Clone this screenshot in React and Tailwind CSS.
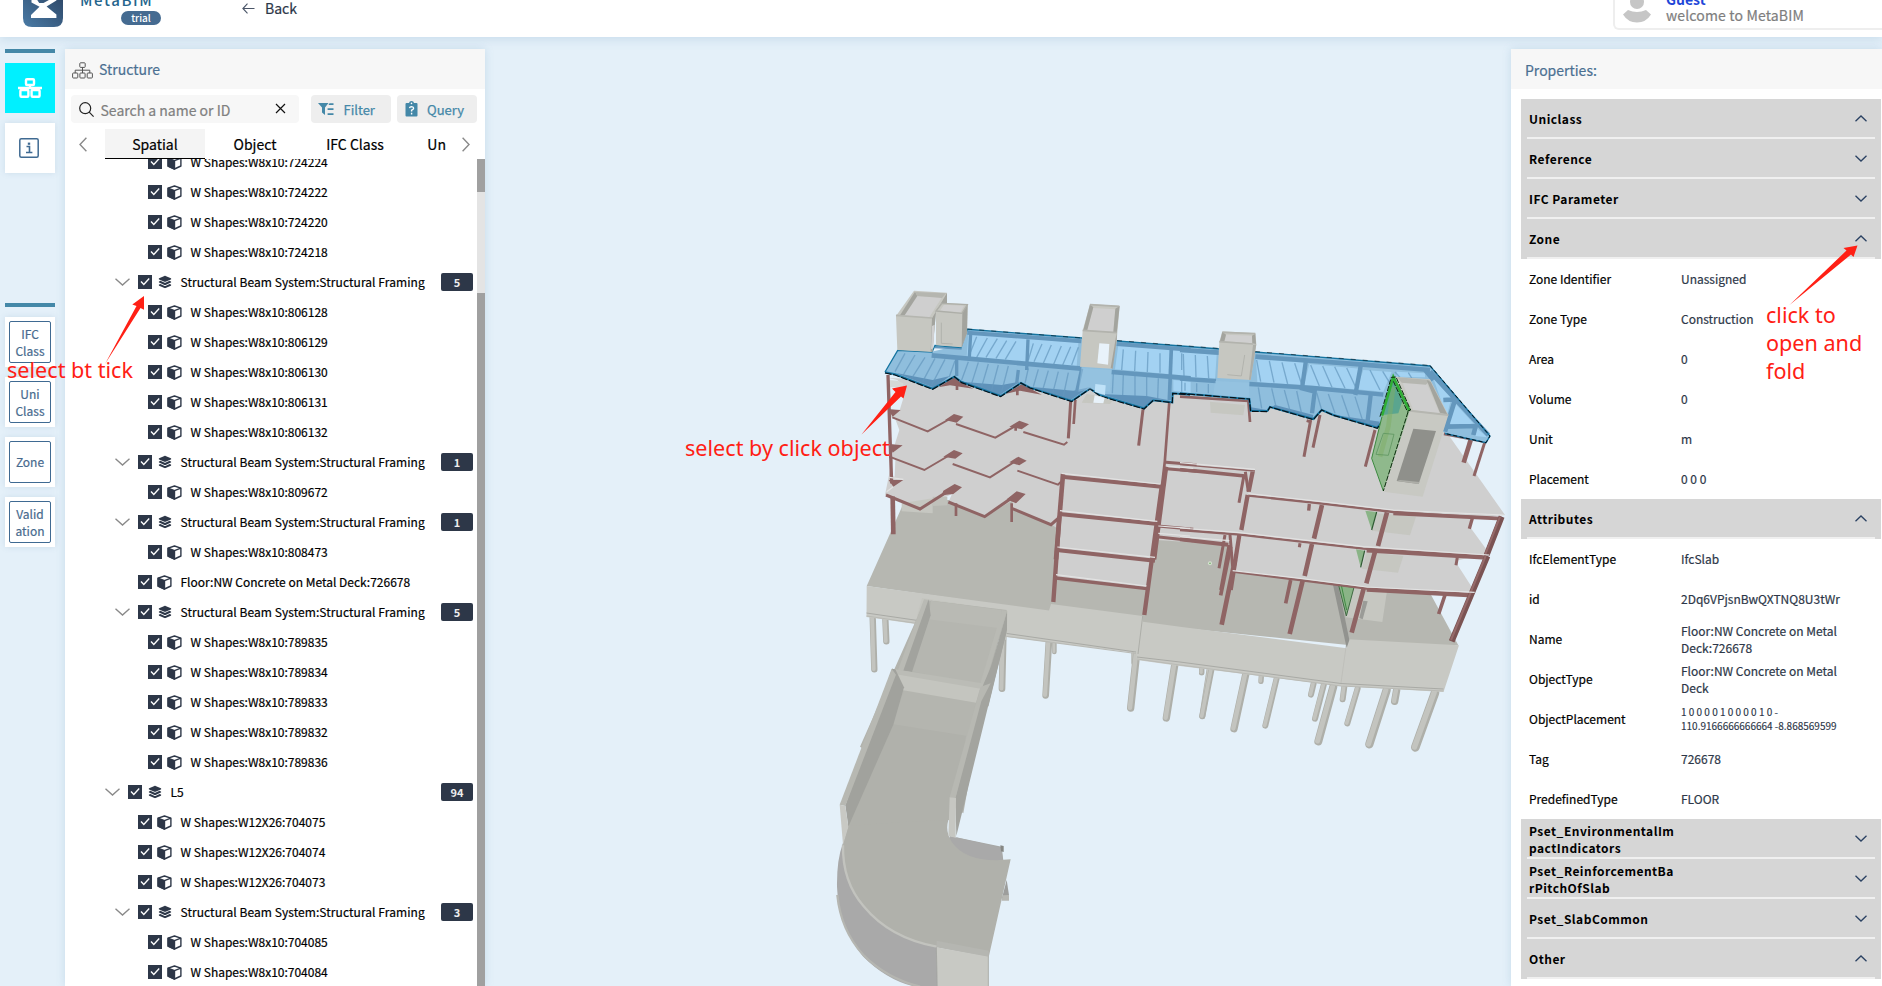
import React from "react";
import { FaLayerGroup } from "react-icons/fa6";

const FONT = "font-['Noto_Sans_CJK_SC',sans-serif]";

const BEAM = "Structural Beam System:Structural Framing";
const TREE = [
  { t: "W Shapes:W8x10:724224", d: 2 },
  { t: "W Shapes:W8x10:724222", d: 2 },
  { t: "W Shapes:W8x10:724220", d: 2 },
  { t: "W Shapes:W8x10:724218", d: 2 },
  { t: BEAM, d: 1, n: 5 },
  { t: "W Shapes:W8x10:806128", d: 2 },
  { t: "W Shapes:W8x10:806129", d: 2 },
  { t: "W Shapes:W8x10:806130", d: 2 },
  { t: "W Shapes:W8x10:806131", d: 2 },
  { t: "W Shapes:W8x10:806132", d: 2 },
  { t: BEAM, d: 1, n: 1 },
  { t: "W Shapes:W8x10:809672", d: 2 },
  { t: BEAM, d: 1, n: 1 },
  { t: "W Shapes:W8x10:808473", d: 2 },
  { t: "Floor:NW Concrete on Metal Deck:726678", d: 1 },
  { t: BEAM, d: 1, n: 5 },
  { t: "W Shapes:W8x10:789835", d: 2 },
  { t: "W Shapes:W8x10:789834", d: 2 },
  { t: "W Shapes:W8x10:789833", d: 2 },
  { t: "W Shapes:W8x10:789832", d: 2 },
  { t: "W Shapes:W8x10:789836", d: 2 },
  { t: "L5", d: 0, n: 94 },
  { t: "W Shapes:W12X26:704075", d: 1 },
  { t: "W Shapes:W12X26:704074", d: 1 },
  { t: "W Shapes:W12X26:704073", d: 1 },
  { t: BEAM, d: 1, n: 3 },
  { t: "W Shapes:W8x10:704085", d: 2 },
  { t: "W Shapes:W8x10:704084", d: 2 },
];

const INDENT = ["pl-[40px]", "pl-[50px]", "pl-[60px]"];

const PROPS = [
  { g: "Uniclass", open: true },
  { g: "Reference" },
  { g: "IFC Parameter" },
  { g: "Zone", open: true },
  { k: "Zone Identifier", v: "Unassigned" },
  { k: "Zone Type", v: "Construction" },
  { k: "Area", v: "0" },
  { k: "Volume", v: "0" },
  { k: "Unit", v: "m" },
  { k: "Placement", v: "0 0 0" },
  { g: "Attributes", open: true },
  { k: "IfcElementType", v: "IfcSlab" },
  { k: "id", v: "2Dq6VPjsnBwQXTNQ8U3tWr" },
  { k: "Name", v: "Floor:NW Concrete on Metal Deck:726678" },
  { k: "ObjectType", v: "Floor:NW Concrete on Metal Deck" },
  { k: "ObjectPlacement", v: "1 0 0 0 0 1 0 0 0 0 1 0 -\n110.9166666666664 -8.868569599", small: true },
  { k: "Tag", v: "726678" },
  { k: "PredefinedType", v: "FLOOR" },
  { g: "Pset_EnvironmentalImpactIndicators" },
  { g: "Pset_ReinforcementBarPitchOfSlab" },
  { g: "Pset_SlabCommon" },
  { g: "Other", open: true },
];

function Cube() {
  return (
    <svg className="size-[15px] shrink-0" viewBox="0 0 15 15" fill="none" stroke="#2d3748" strokeWidth="1.4" strokeLinejoin="round">
      <path d="M7.5 1 L13.9 3.2 V11 L7.5 14 L1.1 11 V3.2 Z" />
      <path d="M1.1 3.2 L7.5 5.6 V14 L1.1 11 Z" fill="#2d3748" />
      <path d="M7.5 5.6 L13.9 3.2" />
    </svg>
  );
}

function Check() {
  return (
    <span className="flex size-[14px] shrink-0 items-center justify-center bg-[#2d3748]">
      <svg className="size-[10px]" viewBox="0 0 10 10" fill="none" stroke="#fff" strokeWidth="1.4">
        <path d="M1 4.6 L3.8 7.4 L9.2 1.6" />
      </svg>
    </span>
  );
}

function TreeRow({ item }) {
  const group = item.n !== undefined;
  return (
    <div className={`flex h-[30px] shrink-0 items-center ${INDENT[item.d]}`}>
      <span className="mr-[8px] flex w-[15px] shrink-0 justify-center">
        {group && (
          <svg className="h-[8px] w-[15px]" viewBox="0 0 15 8" fill="none" stroke="#8a8a8a" strokeWidth="1.4">
            <path d="M0.5 0.8 L7.5 7 L14.5 0.8" />
          </svg>
        )}
      </span>
      <Check />
      <span className="ml-[5px] flex w-[15px] shrink-0 justify-center">
        {group ? <FaLayerGroup className="size-[14px] text-[#2d3748]" /> : <Cube />}
      </span>
      <span className={`ml-[8.5px] grow whitespace-nowrap text-[12px] leading-[18px] text-black [-webkit-text-stroke:0.2px_black] ${group ? "tracking-[0.065px]" : ""}`}>
        {item.t}
      </span>
      {group && (
        <span className="mr-[4px] flex h-[18px] w-[32px] items-center justify-center rounded-[2px] bg-[#2d3748] text-[11px] font-bold leading-none text-[#eee]">
          {item.n}
        </span>
      )}
    </div>
  );
}

function SideBox({ children }) {
  return (
    <div className="flex size-[50px] items-center justify-center bg-white shadow-[0_0_6px_rgba(100,140,170,0.18)]">
      <div className="flex size-[42px] items-center justify-center rounded-[2px] border border-[#3f6a92] text-center text-[12px] leading-[17.4px] text-[#476a8e] [-webkit-text-stroke:0.2px_#476a8e]">
        <div>{children}</div>
      </div>
    </div>
  );
}

function Header() {
  return (
    <header className="relative z-10 flex h-[37px] shrink-0 items-start bg-white shadow-[0_2px_10px_rgba(110,160,195,0.25)]">
      <svg className="ml-[23px] h-[27px] w-[40px] shrink-0" viewBox="0 0 40 27">
        <defs>
          <linearGradient id="lg" x1="0" y1="1" x2="1" y2="0">
            <stop offset="0" stopColor="#4a7ba6" />
            <stop offset="1" stopColor="#2b4362" />
          </linearGradient>
        </defs>
        <path d="M0 -10 H40 V18 Q40 27 31 27 H9 Q0 27 0 18 Z" fill="url(#lg)" />
        <path d="M8.5 -2 V2.6 L16.5 6.8 L8 15 V18 H33.4 V14.4 L23.6 6.6 L33.4 0.4 V-2 L27 -0.6 L20.5 3 H16.2 L13 -2 Z" fill="#fff" />
      </svg>
      <div className="ml-[17px] w-[84px] shrink-0">
        <div className="-mt-[11px] whitespace-nowrap text-[15px] font-medium leading-[22px] tracking-[1.6px] text-[#25658c]">MetaBIM</div>
        <div className="ml-[41px] flex h-[14px] w-[40px] items-center justify-center rounded-full bg-[#456b91] text-[10px] font-medium leading-none text-white">
          trial
        </div>
      </div>
      <div className="ml-[78px] flex items-center">
        <svg className="h-[11px] w-[13px]" viewBox="0 0 13 11" fill="none" stroke="#4a5568" strokeWidth="1.1">
          <path d="M12.5 5.5 H1 M5.5 0.7 L0.9 5.5 L5.5 10.3" />
        </svg>
        <span className="ml-[10px] text-[14px] leading-[16px] text-[#2d3748] [-webkit-text-stroke:0.2px_#2d3748]">Back</span>
      </div>
      <div className="ml-auto -mt-[18px] flex h-[48px] w-[269px] shrink-0 rounded-bl-[6px] border-2 border-r-0 border-[#eee] bg-white">
        <svg className="ml-[8px] mt-[11px] h-[28px] w-[28px]" viewBox="0 0 28 28" fill="#c6c6c6">
          <circle cx="14" cy="7" r="7" />
          <path d="M5 15 Q14 19 23 15 L28 19.5 Q23 27.5 14 27.5 Q5 27.5 0 19.5 Z" />
        </svg>
        <div className="ml-[15px] pt-[7px]">
          <div className="text-[14px] font-bold leading-[16px] text-[#2146d8]">Guest</div>
          <div className="whitespace-nowrap text-[14px] leading-[17px] tracking-[0.15px] text-[#7e7e7e] [-webkit-text-stroke:0.2px_#7e7e7e]">welcome to MetaBIM</div>
        </div>
      </div>
    </header>
  );
}

function Sidebar() {
  return (
    <aside className="flex w-[65px] shrink-0 flex-col pl-[5px] pt-[12px]">
      <div className="h-[4px] w-[50px] bg-[#4488a8]" />
      <div className="mt-[10px] flex size-[50px] items-center justify-center bg-[#00f0ff]">
        <svg className="-mt-[1px] -ml-[1px] h-[20px] w-[24px]" viewBox="0 0 24 20" fill="none" stroke="#fff" strokeWidth="2.4">
          <rect x="8" y="1.2" width="8" height="5.8" rx="1" />
          <rect x="2.4" y="12" width="8" height="6.8" rx="1" />
          <rect x="13.6" y="12" width="8" height="6.8" rx="1" />
          <path d="M0 10 H24 M12 7 V10" />
        </svg>
      </div>
      <div className="mt-[10px] flex size-[50px] items-center justify-center bg-white shadow-[0_0_6px_rgba(100,140,170,0.18)]">
        <svg className="-ml-[2px] size-[20px]" viewBox="0 0 20 20" fill="none" stroke="#3f6a92" strokeWidth="1.5">
          <rect x="0.8" y="0.8" width="18.4" height="18.4" rx="1.5" />
          <path d="M7.5 8.5 H10.5 V14.2 M7 14.5 H13.4" strokeWidth="1.6" />
          <rect x="8.8" y="4.6" width="2.4" height="2.2" fill="#3f6a92" stroke="none" />
        </svg>
      </div>
      <div className="mt-[130px] h-[4px] w-[50px] bg-[#4488a8]" />
      <div className="mt-[10px] flex flex-col gap-[10px]">
        <SideBox>IFC<br />Class</SideBox>
        <SideBox>Uni<br />Class</SideBox>
        <SideBox>Zone</SideBox>
        <SideBox>Valid<br />ation</SideBox>
      </div>
    </aside>
  );
}

function StructurePanel() {
  return (
    <section className="mt-[12px] flex w-[420px] shrink-0 flex-col overflow-hidden bg-white shadow-[0_0_8px_rgba(110,160,195,0.25)]">
      <div className="flex h-[40px] shrink-0 items-center bg-[#f7f7f7] pl-[7px]">
        <svg className="mt-[3px] h-[17px] w-[21px]" viewBox="0 0 21 17" fill="none" stroke="#555" strokeWidth="1">
          <rect x="7.8" y="0.8" width="5.4" height="4.6" rx="0.8" />
          <rect x="0.6" y="11" width="5.2" height="5" rx="0.8" />
          <rect x="7.9" y="11" width="5.2" height="5" rx="0.8" />
          <rect x="15.2" y="11" width="5.2" height="5" rx="0.8" />
          <path d="M10.5 5.4 V11 M3.2 11 V8.2 H17.8 V11" />
        </svg>
        <span className="ml-[6px] text-[14px] leading-[20px] text-[#4b7092] [-webkit-text-stroke:0.2px_#4b7092]">Structure</span>
      </div>
      <div className="mt-[6px] flex h-[28px] shrink-0 pl-[6px]">
        <div className="flex w-[228px] items-center rounded-[4px] bg-[#f7f7f7] pl-[8px]">
          <svg className="size-[15px]" viewBox="0 0 15 15" fill="none" stroke="#222" strokeWidth="1.2">
            <circle cx="6.2" cy="6.2" r="5.5" />
            <path d="M10.2 10.2 L14.6 14.6" />
          </svg>
          <span className="ml-[6.5px] grow pt-[1px] text-[14px] leading-[20px] text-[#808080] [-webkit-text-stroke:0.2px_#808080]">Search a name or ID</span>
          <svg className="-mt-[2px] mr-[13px] size-[11px]" viewBox="0 0 11 11" fill="none" stroke="#111" strokeWidth="1.2">
            <path d="M1 1 L10 10 M10 1 L1 10" />
          </svg>
        </div>
        <div className="ml-[12px] flex w-[80px] items-center rounded-[4px] bg-[#eee] pl-[7px]">
          <svg className="size-[16px]" viewBox="0 0 16 16" fill="#4488a8">
            <path d="M0 2 H10.5 L7 6.6 V14 L4 11.5 V6.6 Z" />
            <path d="M11.5 2.2 H15.5 V4 H10.5 Z M9.6 7.2 H15.5 V9 H9.6 Z M9.6 12.2 H15.5 V14 H9.6 Z" />
          </svg>
          <span className="ml-[9.5px] pt-[1px] text-[13px] leading-[18px] text-[#4488a8] [-webkit-text-stroke:0.25px_#4488a8]">Filter</span>
        </div>
        <div className="ml-[6px] flex w-[80px] items-center rounded-[4px] bg-[#eee] pl-[8px]">
          <svg className="h-[16px] w-[13px]" viewBox="0 0 13 16">
            <path d="M1.5 2 H4 Q4.3 0 6.5 0 Q8.7 0 9 2 H11.5 Q12.5 2 12.5 3 V14.5 Q12.5 15.6 11.5 15.6 H1.5 Q0.5 15.6 0.5 14.5 V3 Q0.5 2 1.5 2 Z" fill="#4488a8" />
            <circle cx="6.5" cy="2.4" r="0.8" fill="#fff" />
            <path d="M4.5 7.2 Q4.8 5.6 6.6 5.6 Q8.6 5.7 8.6 7.3 Q8.5 8.7 6.6 9.2 V10.6 M6.6 11.8 V13.4" fill="none" stroke="#fff" strokeWidth="1.4" />
          </svg>
          <span className="ml-[9px] pt-[1px] text-[13px] leading-[18px] text-[#4488a8] [-webkit-text-stroke:0.25px_#4488a8]">Query</span>
        </div>
      </div>
      <div className="mt-[6px] flex h-[30px] shrink-0 items-stretch text-[14px] leading-[20px] text-black [-webkit-text-stroke:0.2px_black]">
        <div className="flex w-[40px] items-center pl-[14px]">
          <svg className="h-[15px] w-[8px]" viewBox="0 0 8 15" fill="none" stroke="#8a8a8a" strokeWidth="1.4">
            <path d="M7.4 0.8 L1 7.5 L7.4 14.2" />
          </svg>
        </div>
        <div className="flex w-[100px] items-center justify-center border-b border-black bg-[#f4f4f4] pt-[1px]">Spatial</div>
        <div className="flex w-[100px] items-center justify-center">Object</div>
        <div className="flex w-[100px] items-center justify-center">IFC Class</div>
        <div className="flex w-[57px] items-center justify-end pr-[16px]">Un</div>
        <div className="flex items-center">
          <svg className="h-[15px] w-[8px]" viewBox="0 0 8 15" fill="none" stroke="#8a8a8a" strokeWidth="1.4">
            <path d="M0.6 0.8 L7 7.5 L0.6 14.2" />
          </svg>
        </div>
      </div>
      <div className="flex min-h-0 grow">
        <div className="flex grow flex-col overflow-hidden">
          <div className="-mt-[12px] flex flex-col">
            {TREE.map((item, i) => (
              <TreeRow key={i} item={item} />
            ))}
          </div>
        </div>
        <div className="flex w-[8px] shrink-0 flex-col bg-[#e4e4e4]">
          <div className="h-[33px] bg-[#a0a0a0]" />
          <div className="mt-[101px] grow bg-[#a0a0a0]" />
        </div>
      </div>
    </section>
  );
}

function PropertiesPanel() {
  return (
    <section className="mt-[12px] flex w-[371px] shrink-0 flex-col overflow-hidden bg-white shadow-[0_0_8px_rgba(110,160,195,0.25)]">
      <div className="flex h-[40px] shrink-0 items-center bg-[#f7f7f7] pl-[14px] text-[14px] leading-[20px] text-[#4b7092] [-webkit-text-stroke:0.2px_#4b7092]">
        <span className="mt-[1px]">Properties:</span>
      </div>
      <div className="ml-[10px] mt-[10px] flex w-[360px] flex-col">
        {PROPS.map((p, i) =>
          p.g ? (
            <div key={i} className="flex h-[40px] flex-col bg-[#d6d6d6] px-[6px]">
              <div className="flex grow items-center pl-[2px] pt-[2px]">
                <span className="w-[147px] break-all text-[12px] font-bold leading-[17.4px] tracking-[0.48px] text-black">{p.g}</span>
                <svg className="-mt-[1px] ml-auto mr-[8px] h-[7px] w-[12px]" viewBox="0 0 12 7" fill="none" stroke="#2a4162" strokeWidth="1.3">
                  <path d={p.open ? "M0.5 6.2 L6 1 L11.5 6.2" : "M0.5 0.8 L6 6 L11.5 0.8"} />
                </svg>
              </div>
              <div className="h-[2px] shrink-0 bg-[#f0f0f0]" />
            </div>
          ) : (
            <div key={i} className="flex h-[40px] items-center pl-[8px] text-[12px] leading-[17.4px]">
              <span className="w-[152px] shrink-0 text-black [-webkit-text-stroke:0.2px_black]">{p.k}</span>
              <span
                className={
                  p.small
                    ? "w-[162px] whitespace-pre-line text-[10px] leading-[14.5px] text-[#2d3748] [-webkit-text-stroke:0.15px_#2d3748]"
                    : "w-[162px] text-[#2d3748] [-webkit-text-stroke:0.2px_#2d3748]"
                }
              >
                {p.v}
              </span>
            </div>
          )
        )}
      </div>
    </section>
  );
}

const Z = (x, y) => `translate(${x} ${y}) scale(0.33333)`;

function Pile({ l }) {
  const [x1, y1, x2, y2, w] = l;
  return (
    <g strokeLinecap="round">
      <path d={`M${x1} ${y1} L${x2} ${y2 - 6}`} stroke="#aeafa9" strokeWidth={w} />
      <path d={`M${x1 - w * 0.1} ${y1} L${x2 - w * 0.1} ${y2 - 7}`} stroke="#c3c4bf" strokeWidth={w * 0.62} />
    </g>
  );
}

const PILES_W = [
  [68, 410, 73, 574, 19], [106, 415, 109, 490, 19], [460, 460, 456, 632, 20], [613, 480, 613, 522, 14],
  [597, 480, 587, 652, 20], [850, 520, 850, 555, 12], [860, 520, 842, 690, 22], [1055, 560, 1055, 584, 15],
  [975, 550, 949, 720, 22], [1080, 560, 1057, 714, 18],
];
const PILES_E = [
  [65, 380, 65, 404, 16], [95, 385, 67, 535, 18], [198, 400, 162, 572, 22], [244, 408, 243, 430, 16],
  [290, 415, 256, 563, 18], [401, 430, 393, 470, 18], [432, 432, 405, 542, 18], [460, 440, 415, 610, 24],
  [493, 440, 488, 484, 18], [533, 445, 502, 556, 18], [620, 450, 568, 619, 25], [650, 450, 644, 490, 22],
  [765, 458, 706, 628, 26],
];

function Ramp() {
  return (
    <g>
      <g transform={Z(820, 700)}>
        <path d="M408 412 L545 440 L550 482 L470 480 Z" fill="#a6a7a4" />
        <path d="M390 408 L545 443 L548 484 L480 488 Q420 470 385 420 Z" fill="#a9a9a9" />
        <path d="M541 436 L551 438 L551 456 L543 454 Z" fill="#868784" />
        <path d="M560 540 L567 585 L545 598 Z" fill="#9d9e9c" />
        <path d="M548 586 L567 585 L567 602 L545 602 Z" fill="#b6b7b2" />
        <path d="M68 432 Q50 480 51 560 Q55 680 130 770 Q200 840 285 860 H352 V742 L200 620 Z" fill="#a9a9a9" />
        <path d="M52 585 Q62 690 130 765 Q200 835 300 860" fill="none" stroke="#b5b6b1" strokeWidth="7" />
        <path d="M240 -60 L505 -60 L440 200 L385 360 Q375 395 395 425 Q440 492 572 478 L506 772 L350 742 Q210 715 130 620 Q65 545 68 432 L85 375 Z" fill="#b0b1ab" />
        <path d="M220 73 L438 107 L480 -60 L245 -60 Z" fill="#b6b7b1" />
        <path d="M69 436 Q67 545 131 619 Q210 715 350 740" fill="none" stroke="#c2c3be" strokeWidth="7" />
        <path d="M350 722 L506 752 L506 772 L350 742 Z" fill="#b5b6b1" />
        <path d="M349 742 L506 770 V860 H352 Z" fill="#c8c9c4" />
        <path d="M349 742 L352 860 M505 770 V860" stroke="#9fa09b" strokeWidth="2" />
      </g>
      <g transform={Z(850, 480)}>
        <path d="M225 360 L470 390 L400 660 L340 1000 L30 800 Z" fill="#b2b3ad" />
        <path d="M243 362 L455 390 L390 620 L185 573 Z" fill="#b5b6b0" />
        <path d="M243 362 L455 390 L450 445 L235 418 Z" fill="#b9bab4" />
        <path d="M222 358 L236 360 L160 574 L144 570 Z" fill="#b9bab4" />
        <path d="M236 358 L242 406 L186 576 L160 572 Z" fill="#a2a39e" />
        <path d="M456 390 L471 392 L405 612 L388 620 Z" fill="#b9bab4" />
        <path d="M471 394 V450 L415 680 L400 640 Z" fill="#a3a49f" />
        <path d="M126 566 L395 616 L408 612 L372 780 L300 760 L130 730 Z" fill="#b2b3ad" />
        <path d="M163 630 L378 668 L350 780 L105 780 Z" fill="#b4b5af" />
        <path d="M130 568 L392 620 L378 668 L142 628 Z" fill="#c4c5bf" />
        <path d="M126 566 L410 612 L392 626 L134 582 Z" fill="#bbbcb6" />
      </g>
      <g transform={Z(820, 700)}>
        <path d="M220 73 L438 107 L406 294 L387 360 L250 366 L85 378 Z" fill="#b0b1ab" />
        <path d="M216 -94 L226 -92 L252 -38 L220 74 L85 380 L76 316 Z" fill="#a1a29d" />
        <path d="M215 -94 L228 -76 L76 318 L59 314 Z" fill="#b7b8b2" />
        <path d="M59 314 L76 318 L85 380 L69 434 Z" fill="#c8c9c4" />
        <path d="M489 -44 L560 -208 L508 4 L409 408 L406 294 Z" fill="#a3a49f" />
        <path d="M482 -40 L512 -50 L484 4 L406 296 L389 292 Z" fill="#b7b8b2" />
        <path d="M389 292 L408 294 L407 413 L385 408 Z" fill="#c6c7c2" />
      </g>
    </g>
  );
}

function Podium() {
  return (
    <g>
      <g transform={Z(850, 480)}>{PILES_W.map((l, i) => <Pile key={i} l={l} />)}</g>
      <g transform={Z(1180, 540)}>{PILES_E.map((l, i) => <Pile key={i} l={l} />)}</g>
      <path d="M866.7 586 L905 500 L1425 500 L1430 593 L1458.3 645.3 L1348 645 L1143 624 L1049 612 Z" fill="#b6b7b1" />
      <path d="M866.7 586 L1049 610.5 L1051 604 L1142.7 616 L1143 621.7 L1180 626.7 L1346.7 648.3 L1348 639.3 L1459 645.3 L1443.5 692 L1341 686 L1180 666 L1137 660 L1136 653 L1007 637 L866.5 617 Z" fill="#c8c9c4" />
      <path d="M866.5 613 L1007 633.5 L1136 652 M1137 657 L1180 662 L1341 683.5 L1443.5 689" fill="none" stroke="#a5a6a1" strokeWidth="0.9" />
      <path d="M866.5 616 L1007 636.5 L1136 653.5 M1137 659 L1180 665 L1341 686 L1443.5 691" fill="none" stroke="#b9bab5" strokeWidth="1.2" />
      <path d="M1142.7 616 L1138 654" stroke="#a9aaa5" strokeWidth="0.9" />
      <path d="M1347 640 L1341 683" stroke="#bcbdb8" strokeWidth="0.8" />
      <path d="M917 616 L922 598 L1008 611 L1006 640 Z" fill="#c4c5bf" />
    </g>
  );
}

function Floors() {
  return (
    <g>
      <g transform={Z(1180, 540)}>
        <path d="M545 60 L635 60 L607 246 L497 232 Z" fill="#c6c7c1" />
        <path d="M550 182 L563 184 L548 238 L538 234 Z" fill="#9a9b97" />
        <path d="M458 130 L475 136 L508 300 L500 324 Z" fill="#92938f" />
        <path d="M476 136 L522 142 L499 228 Z" fill="#8ab487" stroke="#3f6a42" strokeWidth="3" />
        <path d="M484 136 L500 210" stroke="#3f8a42" strokeWidth="3" />
      </g>
      <path d="M890 378 L1190 392 L1445 430 L1505 515 L1471 518 L1470 527 L1489 553 L1455 561 L1475 592 L1380 588 L1233 571.5 L1231 545 L1157 540 L1147 588 L1054 577 L1057 528 L1051.7 525 L1011 509 L1013 500 L984.5 517 L948 503 L952 494 L920 509 L885 495 L888 480 L893 455 L890 430 Z" fill="#cfcfcf" />
      <g transform={Z(1180, 300)} fill="#c6c7c1">
        <path d="M590 640 L708 650 L690 706 L575 692 Z" />
        <path d="M560 755 L670 768 L654 818 L545 806 Z" />
      </g>
      <g transform={Z(860, 270)}>
        <path d="M90 325 L112 330 L130 352 L130 385 L118 424 L92 416 Z M90 440 L106 448 L118 480 L104 524 L92 520 Z M100 562 L106 570 L104 620 L92 618 Z" fill="#e4f0f9" />
        <path d="M86 330 L112 332 L130 340 L130 352 L90 352 Z" fill="#d4d8d6" />
        <path d="M125 700 L218 685 L218 730 L125 724 Z" fill="#c6c7c1" />
        <path d="M218 680 L262 680 L262 706 L218 708 Z" fill="#c0c1bb" />
      </g>
    </g>
  );
}

function Steel() {
  return (
    <g fill="none">
      <g transform={Z(860, 270)} stroke="#8f6464">
        <path d="M84 315 L90 500 L95 640" strokeWidth="10" />
        <path d="M98 680 L100 793" strokeWidth="14" />
        <path d="M97 442 L203 484 L285 438" strokeWidth="6" />
        <path d="M88 560 L193 600 L285 546" strokeWidth="6" />
        <path d="M78 675 L180 717 L285 650" strokeWidth="9" />
        <path d="M288 462 L406 503 L480 460" strokeWidth="6" />
        <path d="M278 582 L390 622 L475 568" strokeWidth="6" />
        <path d="M265 696 L374 740 L475 670" strokeWidth="9" />
        <path d="M490 486 L612 524 L622 516" strokeWidth="6" />
        <path d="M472 602 L594 644 L602 636" strokeWidth="6" />
        <path d="M455 715 L573 764 L596 744" strokeWidth="9" />
        <path d="M288 700 V738 M455 700 V756 M291 340 V360 M472 360 V376 M467 465 V482" strokeWidth="8" />
        <g fill="#8f6464" stroke="none">
          <path d="M255 450 L282 432 L310 440 L290 458 Z M448 470 L478 452 L507 463 L485 478 Z" />
          <path d="M250 560 L282 540 L308 550 L286 566 Z M448 577 L475 560 L500 572 L478 586 Z" />
          <path d="M250 662 L284 642 L306 652 L280 672 L245 676 Z M440 688 L470 664 L497 672 L468 700 Z" />
          <path d="M84 418 L122 420 L98 440 Z M86 522 L128 526 L98 548 Z M86 630 L130 630 L100 650 Z" />
          <path d="M235 352 L283 322 L305 338 L340 356 L270 346 Z M435 372 L485 342 L512 356 L545 374 L480 362 Z" />
        </g>
        <path d="M632 395 L625 505" strokeWidth="9" />
        <path d="M646 390 L641 462" strokeWidth="8" />
        <path d="M849 418 L836 527" strokeWidth="9" />
        <path d="M928 395 L914 580 M915 570 L880 868" strokeWidth="8" />
        <path d="M918 590 L882 868" strokeWidth="14" />
        <path d="M609 612 L588 868" strokeWidth="14" />
        <path d="M605 620 L905 650 M598 732 L895 762 M590 840 L885 872" strokeWidth="12" />
        <path d="M918 596 L1010 604 M918 577 L1010 584 M890 800 L1000 812 M893 768 L1000 778" strokeWidth="9" />
      </g>
      <g transform={Z(850, 480)} stroke="#8f6464">
        <path d="M628 110 L610 366 M935 20 L883 405" strokeWidth="13" />
        <path d="M618 294 L890 326" strokeWidth="10" />
      </g>
      <g transform={Z(1180, 300)} stroke="#8f6464">
        <path d="M0 290 L205 303 L210 366" strokeWidth="8" />
        <path d="M392 360 L372 470 M420 345 L399 443 M585 390 L556 500 M380 362 L395 366" strokeWidth="9" />
        <path d="M0 508 L195 528" strokeWidth="11" />
        <path d="M0 494 L225 513" strokeWidth="4" />
        <path d="M192 525 L177 608 M196 515 L205 575" strokeWidth="9" />
        <path d="M218 515 L206 575 M203 585 L184 690 M178 705 L152 870" strokeWidth="13" />
        <path d="M205 587 L420 610 L640 636 L800 646 L968 656" strokeWidth="7" />
        <path d="M640 640 L965 656" strokeWidth="11" />
        <path d="M426 615 L402 716 M621 637 L594 738" strokeWidth="14" />
        <path d="M388 612 L386 632 M877 655 L868 686" strokeWidth="10" />
        <path d="M0 690 L180 704 L550 746 L925 770" strokeWidth="7" />
        <path d="M560 752 L920 774" strokeWidth="11" />
        <path d="M0 718 L145 734" strokeWidth="12" />
        <path d="M396 732 L374 828 M586 752 L559 850" strokeWidth="14" />
        <path d="M360 730 L358 742 M832 772 L828 796" strokeWidth="9" />
        <path d="M135 705 L117 805 M147 735 L122 870 M150 705 L158 800" strokeWidth="9" />
        <path d="M872 420 L851 488" strokeWidth="14" />
        <path d="M914 428 L882 528" strokeWidth="9" />
        <path d="M792 400 L918 424" strokeWidth="12" />
      </g>
      <g transform={Z(1180, 540)} stroke="#8f6464">
        <path d="M158 95 L360 120 L560 146 L880 162" strokeWidth="7" />
        <path d="M560 150 L878 167" strokeWidth="11" />
        <path d="M165 60 L125 254 M368 122 L329 282 M551 146 L515 278" strokeWidth="14" />
        <path d="M332 120 L317 190 M795 165 L776 222 M152 20 L122 166" strokeWidth="11" />
      </g>
      <g transform={Z(1180, 300)}>
        <path d="M965 650 L920 765 M922 768 L815 1024" stroke="#7b5353" strokeWidth="18" />
        <path d="M960 650 L915 765 M917 768 L813 1020" stroke="#966a6a" strokeWidth="6" />
      </g>
      <g stroke="#e2e2e2" strokeWidth="3.5">
        <path transform={Z(1180, 300)} d="M205 581 L420 604 L640 630 L800 638 L974 645 M0 684 L180 698 L550 740 L928 765 M0 488 L225 508 M0 710 L148 722" />
        <path transform={Z(1180, 540)} d="M158 92 L360 115 L560 141 L884 157" />
        <path transform={Z(860, 270)} d="M605 610 L900 642 M600 722 L892 754 M592 831 L885 862 M920 588 L1000 595 M895 790 L990 798 M895 768 L990 775" />
        <path transform={Z(850, 480)} d="M618 284 L890 318" />
        <path transform={Z(860, 270)} d="M88 622 L130 628 M80 665 L100 650" />
      </g>
    </g>
  );
}

const line = (pts) => pts.map((p) => `M${p[0]} ${p[1]} L${p[2]} ${p[3]}`).join(" ");
const RAFT_W = line([
  [135, 250, 105, 305], [165, 255, 128, 318], [195, 262, 155, 325], [225, 265, 188, 335], [255, 268, 215, 345], [285, 272, 268, 320],
  [350, 200, 330, 250], [382, 204, 350, 262], [412, 206, 378, 262], [440, 212, 408, 265], [468, 214, 436, 268],
  [520, 220, 505, 270], [546, 222, 522, 275], [574, 225, 550, 280], [604, 228, 580, 285], [632, 230, 608, 285], [655, 232, 635, 285],
  [325, 275, 305, 330], [355, 277, 335, 340], [385, 282, 365, 350], [415, 285, 395, 360], [445, 288, 425, 365], [505, 295, 495, 340],
  [535, 298, 520, 350], [565, 302, 548, 360], [595, 305, 578, 370], [625, 308, 610, 378],
  [790, 238, 785, 300], [827, 242, 824, 303], [864, 246, 862, 306], [900, 250, 900, 308],
  [760, 310, 757, 370], [790, 313, 788, 375], [825, 316, 825, 378], [860, 320, 860, 380], [895, 325, 893, 385],
  [965, 250, 965, 300], [965, 330, 965, 365],
]);
const RAFT_E = line([
  [10, 162, 12, 228], [46, 165, 48, 232], [82, 168, 86, 235], [15, 248, 15, 272], [50, 250, 50, 276], [85, 252, 85, 280],
  [230, 180, 242, 245], [268, 183, 282, 248], [306, 187, 323, 252], [344, 190, 366, 256],
  [235, 262, 245, 325], [275, 265, 288, 320], [313, 270, 330, 332], [350, 273, 365, 342],
  [392, 195, 418, 258], [428, 198, 456, 262], [464, 200, 495, 265], [500, 204, 530, 268],
  [410, 278, 425, 330], [445, 282, 465, 340], [485, 286, 508, 352], [525, 290, 548, 362],
  [570, 210, 600, 270], [608, 214, 630, 250], [645, 216, 660, 232], [685, 218, 695, 234],
]);

function Roof() {
  return (
    <g>
      <path d="M885 371.7 L897.7 350 L931.7 351.7 L960 345 L967.3 329.3 L1180 345.7 L1430 366 L1490 436 L1486 442.7 L1445 433 L1400 400 L1377.3 427.7 L1333.3 415 L1321.7 410 L1313.3 419 L1270 406.7 L1267 411 L1250.7 410.7 L1249.3 399 L1172.7 393.3 L1172.3 402.3 L1153.3 400 L1144 408.3 L1100 395 L1090 388.3 L1071.7 401 L1030 387.3 L1021 382.7 L1000.7 396 L961.7 381.7 L954.3 376 L932.7 388.3 L895 374 Z" fill="#8fbedd" />
      <g transform={Z(860, 270)}>
        <path d="M325 190 L655 218 L650 290 L320 262 Z M775 225 L992 242 V318 L765 298 Z M940 330 L992 335 V368 L940 362 Z" fill="#a3d2f2" />
        <path d="M105 308 L218 330 L270 318 L222 353 Z M305 335 L425 345 L480 335 L420 374 Z M510 350 L640 362 L688 352 L632 390 Z M722 372 L860 378 L935 392 L880 388 L852 412 Z" fill="#5f92ba" />
      </g>
      <g transform={Z(1180, 300)}>
        <path d="M0 155 L110 165 L105 240 L0 230 Z M228 178 L380 188 L362 255 L232 246 Z M388 192 L540 206 L525 268 L372 256 Z M550 210 L635 216 L610 275 L530 268 Z M650 215 L735 220 L735 232 L650 230 Z M760 235 L815 290 L800 350 Z M825 310 L880 370 L818 385 L805 360 Z M890 385 L922 412 L885 408 Z" fill="#a3d2f2" />
        <path d="M212 322 L262 330 L285 315 L400 345 L398 356 L272 322 L260 334 L212 334 Z M465 345 L600 365 L592 382 Z" fill="#5f92ba" />
      </g>
      <g transform={Z(860, 270)} fill="none" stroke="#6497bd">
        <path d={RAFT_W} strokeWidth="4" opacity="0.7" />
        <path d="M322 188 L664 214 M770 222 L992 239" strokeWidth="12" />
        <path d="M215 256 L664 296 M755 306 L992 325" strokeWidth="14" />
        <path d="M332 190 L328 262 M504 208 L500 300 M475 300 L470 340 M290 268 V318 M665 296 L650 365" strokeWidth="10" />
        <path d="M934 235 L928 390" strokeWidth="11" />
        <path d="M225 232 L305 236" strokeWidth="6" />
      </g>
      <g transform={Z(1180, 300)} fill="none" stroke="#6497bd">
        <path d={RAFT_E} strokeWidth="4" opacity="0.7" />
        <path d="M0 150 L118 158 M226 170 L540 193 L750 210" strokeWidth="14" />
        <path d="M0 236 L108 243 M208 252 L400 264 L610 284" strokeWidth="13" />
        <path d="M378 180 L366 265 L404 275 L396 340 M542 198 L526 285 M572 285 L562 370 M735 210 L760 240" strokeWidth="13" />
        <path d="M750 215 L925 405 M825 300 L795 395 M888 375 L880 405 M798 380 L890 378 M790 300 L825 298" strokeWidth="14" />
      </g>
      <g fill="none">
        <g stroke="#1574a0" strokeWidth="1.3">
          <path d="M885 372 L897.7 350.3 L932 352 L935 345.5 L961 347.5 L967.3 329.3 L1082 338 M1117 341 L1220 349 M1255 352 L1430 366 L1490 436 L1486 442.7 L1445 433.5" />
          <path transform={Z(860, 270)} d="M75 307 L105 313 L218 356 L283 320 L305 336 L422 378 L483 339 L510 353 L635 393 L690 356 L720 376 L852 415 L880 391 L937 397 L938 370 L990 374" strokeWidth="6" />
          <path transform={Z(1180, 300)} d="M0 280 L208 297 L212 332 L262 333 L270 321 L400 357 L425 330 L460 345 L592 383 L610 360" strokeWidth="6" />
        </g>
        <g stroke="#041018">
          <path d="M967.3 329 L1082 338 M1117 340.5 L1220 348.5 M1255 351.5 L1430 365.5" strokeWidth="0.8" strokeDasharray="5 7" opacity="0.7" />
          <path d="M1430 365.5 L1490 436 L1486 442.7 L1445 433.5" strokeWidth="1" strokeDasharray="4 2.5" />
          <path transform={Z(860, 270)} d="M75 309 L105 315 L218 358 L283 320 L305 338 L422 380 L483 339 L510 354 L635 395 L690 356 L720 378 L852 417 L880 391 L937 398 L938 370 L990 374" strokeWidth="3.5" strokeDasharray="20 5" />
          <path transform={Z(1180, 300)} d="M0 280 L208 297 L212 334 L262 335 L270 321 L400 359 L425 330 L460 346 L592 385 L610 360" strokeWidth="3.5" strokeDasharray="20 5" />
        </g>
      </g>
    </g>
  );
}

function Towers() {
  return (
    <g>
      <g transform={Z(860, 270)}>
        <path d="M108 138 L162 62 L261 68 L260 100 L228 125 L217 246 L112 240 Z" fill="#c6c7c1" />
        <path d="M124 138 L168 78 L246 82 L208 142 Z" fill="#cfcfcf" />
        <path d="M165 65 L172 78 L134 136 L120 136 Z" fill="#a3a49e" />
        <path d="M166 66 L258 70 L246 84 L172 78 Z" fill="#b5b6b0" />
        <path d="M261 69 V105 L228 126 L217 246 L212 245 L216 145 Z" fill="#a3a49e" />
        <path d="M108 136 L216 144" stroke="#b5b6b0" strokeWidth="5" />
        <path d="M216 168 L224 164 L220 235 L213 238 Z" fill="#cfcfcf" />
        <path d="M228 122 L246 99 L323 103 L321 190 L305 232 L228 226 Z" fill="#c6c7c1" />
        <path d="M240 122 L252 104 L312 107 L302 127 Z" fill="#cfcfcf" />
        <path d="M323 103 L321 190 L305 232 L307 130 Z" fill="#a3a49e" />
        <path d="M228 123 L306 130 L322 104 L246 100 Z" fill="none" stroke="#adaea8" strokeWidth="4" />
        <path d="M244 158 V220 L278 222" fill="none" stroke="#adaea8" strokeWidth="2.5" />

        <path d="M668 182 L690 102 L779 108 L770 212 L756 296 L660 290 Z" fill="#c6c7c1" />
        <path d="M680 180 L700 114 L766 118 L760 186 Z" fill="#cfcfcf" />
        <path d="M690 103 L700 112 L682 180 L670 180 Z M779 108 L766 116 L760 186 L770 190 Z" fill="#a3a49e" />
        <path d="M770 188 V212 L758 296 L752 294 Z" fill="#a3a49e" />
        <path d="M668 181 L770 188 M690 104 L778 109" stroke="#b2b3ad" strokeWidth="5" />
        <path d="M718 220 L748 222 L744 284 L712 280 Z" fill="#e8f2fa" />
        <path d="M664 294 L754 300 L750 365 L690 358 L655 365 Z" fill="#9cc8e4" opacity="0.45" />
        <path d="M706 342 L737 346 L735 375 L704 366 Z" fill="#bfe2f8" />
        <path d="M680 372 L720 378 L758 392 L750 402 L665 398 Z" fill="#c6c7c1" />
        <path d="M704 376 L734 384 L730 400 L700 398 Z" fill="#e8f2fa" />
      </g>
      <g transform={Z(1180, 300)}>
        <path d="M118 126 L127 94 L226 100 L229 132 L212 240 L112 234 Z" fill="#c6c7c1" />
        <path d="M134 124 L138 104 L216 107 L217 130 Z" fill="#cfcfcf" />
        <path d="M127 95 L138 104 L133 124 L120 124 Z M226 101 L216 107 L217 130 L228 132 Z" fill="#a3a49e" />
        <path d="M229 133 L212 240 L207 239 L219 135 Z" fill="#adaea8" />
        <path d="M118 125 L220 132 M128 97 L226 101" stroke="#b2b3ad" strokeWidth="5" />
        <path d="M194 165 L184 228 L142 224" fill="none" stroke="#adaea8" strokeWidth="2.5" />
        <path d="M105 243 L208 248 L206 295 L100 286 Z" fill="#9cc8e4" opacity="0.45" />
        <path d="M90 305 L195 315 L190 346 L92 338 Z" fill="#c6c7c1" />

        <path d="M680 330 L645 230 L750 238 L805 345 L728 590 L610 575 Z" fill="#c8c9c3" />
        <path d="M668 250 L740 250 L780 342 L700 330 Z" fill="#cfcfcf" />
        <path d="M652 232 L750 240 L738 254 L665 248 Z" fill="#b5b6b0" />
        <path d="M740 240 L752 245 L803 345 L780 338 Z" fill="#a3a49e" />
        <path d="M690 332 L805 345" stroke="#b5b6b0" strokeWidth="6" />
        <path d="M700 386 L768 393 L716 552 L650 543 Z" fill="#8f908b" />
        <path d="M650 543 L716 552 L718 546 L660 540 Z" fill="#adaea8" />
        <path d="M640 230 L690 330 L610 573 L575 475 L606 345 Z" fill="#8fb98c" />
        <path d="M640 240 L668 300 L655 340 L606 345 Z" fill="#5aa58f" />
        <path d="M640 260 L625 380 L600 470" fill="none" stroke="#7fae66" strokeWidth="14" opacity="0.5" />
        <path d="M610 400 L642 403 L625 466 L588 463 Z" fill="none" stroke="#5f9660" strokeWidth="2.5" />
        <path d="M606 347 L640 231 L688 332" fill="none" stroke="#2fae35" strokeWidth="8" />
        <path d="M606 350 L575 475 L610 573" fill="none" stroke="#3c8a40" strokeWidth="3" />
        <path d="M600 350 L634 232 L648 231 L692 330 L682 334 L640 244 M684 336 L610 573" fill="none" stroke="#0a2a0c" strokeWidth="3" strokeDasharray="16 4" />
        <path d="M556 632 L590 636 L575 690 Z M528 748 L554 752 L542 802 Z" fill="#8ab487" />
        <path d="M590 636 L575 690 M554 752 L542 802" stroke="#2f5a32" strokeWidth="3.5" />
        <circle cx="90" cy="790" r="6" fill="#d5e2d0" />
        <circle cx="90" cy="790" r="2.5" fill="#6fa866" />
      </g>
    </g>
  );
}

function Viewer() {
  return (
    <svg className="h-full w-full" viewBox="485 37 1026 949" preserveAspectRatio="xMinYMin slice">
      <Podium />
      <Ramp />
      <Floors />
      <Steel />
      <Roof />
      <Towers />
    </svg>
  );
}

function Note({ className, children }) {
  return (
    <div className={`absolute whitespace-nowrap font-['Noto_Sans',sans-serif] text-[21.6px] leading-[28px] text-[#ff2015] ${className}`}>
      {children}
    </div>
  );
}

export default function App() {
  return (
    <div className={`relative flex h-[986px] w-[1882px] flex-col overflow-hidden bg-[#e4f0f9] ${FONT}`}>
      <Header />
      <div className="flex min-h-0 grow">
        <Sidebar />
        <StructurePanel />
        <main className="min-w-0 grow">
          <Viewer />
        </main>
        <PropertiesPanel />
      </div>
      <svg className="pointer-events-none absolute inset-0 z-20 h-full w-full" viewBox="0 0 1882 986" fill="#ff2015">
        <path d="M144 296 L132.3 304.5 L136.5 306 L105 364 L140.5 308 L144 309.7 Z" />
        <path d="M907 385.5 L892 388.5 L895.5 392 L861.5 434.5 L901 396.5 L903.5 398.5 Z" />
        <path d="M1857.5 245.5 L1843.5 248 L1846.5 250.5 L1789.5 305 L1851 254.5 L1853.5 257 Z" />
      </svg>
      <Note className="left-[7px] top-[356px] z-20">select bt tick</Note>
      <Note className="left-[685px] top-[434px] z-20">select by click object</Note>
      <Note className="left-[1766px] top-[301px] z-20">click to<br />open and<br />fold</Note>
    </div>
  );
}
